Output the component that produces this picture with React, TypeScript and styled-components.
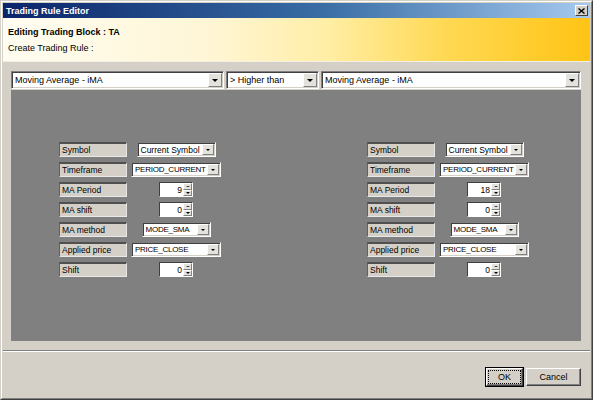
import styled, { createGlobalStyle } from 'styled-components';

// Trading Rule Editor dialog (Windows classic look)

const GlobalStyle = createGlobalStyle`
  html, body {
    margin: 0;
    padding: 0;
    background: #d4d0c8;
  }
  * {
    box-sizing: border-box;
  }
`;

const Window = styled.div`
  width: 593px;
  height: 400px;
  display: flex;
  flex-direction: column;
  background: #d4d0c8;
  border-top: 1px solid #d4d0c8;
  border-left: 1px solid #d4d0c8;
  border-right: 1px solid #404040;
  border-bottom: 1px solid #404040;
  font-family: 'Liberation Sans', Arial, sans-serif;
  color: #000;
`;

const Frame = styled.div`
  flex: 1;
  display: flex;
  flex-direction: column;
  padding: 1px;
  border-top: 1px solid #ffffff;
  border-left: 1px solid #ffffff;
  border-right: 1px solid #808080;
  border-bottom: 1px solid #808080;
`;

const TitleBar = styled.div`
  height: 15px;
  display: flex;
  align-items: center;
  justify-content: space-between;
  padding: 0 2px 0 3px;
  background: linear-gradient(to right, #0a246a 0%, #3a6ea5 55%, #a6caf0 100%);
  color: #fff;
  font-size: 9px;
  font-weight: bold;
`;

const CloseBtn = styled.div`
  width: 13px;
  height: 11px;
  display: flex;
  align-items: center;
  justify-content: center;
  background: #d4d0c8;
  border-top: 1px solid #fff;
  border-left: 1px solid #fff;
  border-right: 1px solid #404040;
  border-bottom: 1px solid #404040;
`;

const Header = styled.div`
  height: 44px;
  display: flex;
  flex-direction: column;
  justify-content: center;
  gap: 6px;
  padding-left: 5px;
  background: linear-gradient(
    to right,
    #fffdf2 0%,
    #fff6d6 35%,
    #ffeea6 55%,
    #ffd955 75%,
    #ffc414 100%
  );
  border-bottom: 1px solid #f4f0e4;
`;

const HeaderTitle = styled.div`
  font-size: 9px;
  font-weight: bold;
`;

const HeaderSub = styled.div`
  font-size: 9px;
`;

const Body = styled.div`
  display: flex;
  flex-direction: column;
  padding: 9px 9px 0 8px;
`;

const ComboRow = styled.div`
  display: flex;
  gap: 2px;
  height: 18px;
  margin-bottom: 1px;
`;

const ComboBox = styled.div<{ $w?: number; $h: number; $grow?: boolean }>`
  display: flex;
  width: ${(p) => (p.$w ? `${p.$w}px` : 'auto')};
  flex: ${(p) => (p.$grow ? 1 : 'none')};
  height: ${(p) => p.$h}px;
  background: #fff;
  border-top: 1px solid #808080;
  border-left: 1px solid #808080;
  border-right: 1px solid #fff;
  border-bottom: 1px solid #fff;
  box-shadow: inset 1px 1px 0 #404040, inset -1px -1px 0 #d4d0c8;
  padding: 1px;
`;

const ComboText = styled.div<{ $size: number; $tight?: boolean }>`
  flex: 1;
  min-width: 0;
  display: flex;
  align-items: center;
  padding-left: 2px;
  font-size: ${(p) => p.$size}px;
  letter-spacing: ${(p) => (p.$tight ? '-0.25px' : '0')};
  white-space: nowrap;
`;

const DropBtn = styled.div<{ $w: number }>`
  width: ${(p) => p.$w}px;
  flex: none;
  display: flex;
  align-items: center;
  justify-content: center;
  background: #e4e2dc;
  border-top: 1px solid #fff;
  border-left: 1px solid #fff;
  border-right: 1px solid #808080;
  border-bottom: 1px solid #808080;
`;

const Arrow = styled.div<{ $up?: boolean; $s?: number }>`
  width: 0;
  height: 0;
  border-left: ${(p) => p.$s ?? 3}px solid transparent;
  border-right: ${(p) => p.$s ?? 3}px solid transparent;
  ${(p) =>
    p.$up
      ? `border-bottom: ${(p.$s ?? 3) - 1}px solid #000;`
      : `border-top: ${p.$s ?? 3}px solid #000;`}
`;

const Panel = styled.div`
  height: 251px;
  background: #808080;
  padding: 52px 0 0 48px;
`;

const Columns = styled.div`
  display: grid;
  grid-template-columns: 166px 166px;
  column-gap: 142px;
`;

const Column = styled.div`
  display: flex;
  flex-direction: column;
  gap: 5px;
`;

const FieldRow = styled.div`
  display: flex;
  height: 15px;
`;

const Label = styled.div`
  width: 68px;
  height: 15px;
  display: flex;
  align-items: center;
  padding-left: 2px;
  font-size: 8.5px;
  background: #d4d0c8;
  border-top: 2px solid #505050;
  border-left: 1px solid #606060;
  border-right: 1px solid #e8e8e8;
  border-bottom: 1px solid #e8e8e8;
`;

const Cell = styled.div`
  flex: 1;
  display: flex;
  justify-content: center;
`;

const SpinBox = styled.div`
  width: 34px;
  height: 15px;
  display: flex;
  background: #fff;
  border-top: 1px solid #404040;
  border-left: 1px solid #404040;
  border-right: 1px solid #fff;
  border-bottom: 1px solid #fff;
`;

const SpinText = styled.div`
  flex: 1;
  display: flex;
  align-items: center;
  justify-content: flex-end;
  padding-right: 1px;
  font-size: 8.5px;
`;

const SpinBtns = styled.div`
  width: 9px;
  display: flex;
  flex-direction: column;
`;

const SpinHalf = styled.div`
  flex: 1;
  display: flex;
  align-items: center;
  justify-content: center;
  background: #e4e2dc;
  border-top: 1px solid #fff;
  border-left: 1px solid #fff;
  border-right: 1px solid #808080;
  border-bottom: 1px solid #808080;
`;

const Separator = styled.div`
  margin-top: 9px;
  height: 2px;
  border-top: 1px solid #808080;
  border-bottom: 1px solid #fff;
`;

const Footer = styled.div`
  flex: 1;
  display: flex;
  justify-content: flex-end;
  align-items: flex-start;
  gap: 3px;
  padding: 16px 9px 0 0;
`;

const Button = styled.div<{ $default?: boolean; $w: number }>`
  width: ${(p) => p.$w}px;
  height: 18px;
  display: flex;
  align-items: center;
  justify-content: center;
  font-size: 9px;
  background: #d4d0c8;
  border-top: 1px solid #fff;
  border-left: 1px solid #fff;
  border-right: 1px solid #404040;
  border-bottom: 1px solid #404040;
  box-shadow: inset -1px -1px 0 #808080;
  ${(p) => (p.$default ? 'outline: 1px solid #000;' : '')}
`;

const FocusRect = styled.div`
  padding: 1px 9px;
  border: 1px dotted #000;
`;

type Field =
  | { label: string; kind: 'combo'; value: string; width: number }
  | { label: string; kind: 'spin'; value: string };

const makeFields = (period: string): Field[] => [
  { label: 'Symbol', kind: 'combo', value: 'Current Symbol', width: 79 },
  { label: 'Timeframe', kind: 'combo', value: 'PERIOD_CURRENT', width: 90 },
  { label: 'MA Period', kind: 'spin', value: period },
  { label: 'MA shift', kind: 'spin', value: '0' },
  { label: 'MA method', kind: 'combo', value: 'MODE_SMA', width: 69 },
  { label: 'Applied price', kind: 'combo', value: 'PRICE_CLOSE', width: 90 },
  { label: 'Shift', kind: 'spin', value: '0' }
];

const Combo = ({ value, width, h, size, grow }: { value: string; width?: number; h: number; size: number; grow?: boolean }) => {
  const upper = value === value.toUpperCase();
  return (
    <ComboBox $w={width} $h={h} $grow={grow}>
      <ComboText $size={upper && h < 16 ? 8 : size} $tight={upper && h < 16}>
        {value}
      </ComboText>
      <DropBtn $w={h > 16 ? 14 : 12}>
        <Arrow $s={h > 16 ? 3 : 2.5} />
      </DropBtn>
    </ComboBox>
  );
};

const Spin = ({ value }: { value: string }) => (
  <SpinBox>
    <SpinText>{value}</SpinText>
    <SpinBtns>
      <SpinHalf>
        <Arrow $up $s={2} />
      </SpinHalf>
      <SpinHalf>
        <Arrow $s={2} />
      </SpinHalf>
    </SpinBtns>
  </SpinBox>
);

const FieldColumn = ({ fields }: { fields: Field[] }) => (
  <Column>
    {fields.map((f) => (
      <FieldRow key={f.label}>
        <Label>{f.label}</Label>
        <Cell>
          {f.kind === 'combo' ? (
            <Combo value={f.value} width={f.width} h={15} size={8.5} />
          ) : (
            <Spin value={f.value} />
          )}
        </Cell>
      </FieldRow>
    ))}
  </Column>
);

const App = () => {
  return (
    <>
      <GlobalStyle />
      <Window>
        <Frame>
          <TitleBar>
            <span>Trading Rule Editor</span>
            <CloseBtn>
              <svg width="7" height="6" viewBox="0 0 7 6">
                <path d="M0.5 0.5 L6.5 5.5 M6.5 0.5 L0.5 5.5" stroke="#000" strokeWidth="1.4" />
              </svg>
            </CloseBtn>
          </TitleBar>
          <Header>
            <HeaderTitle>Editing Trading Block : TA</HeaderTitle>
            <HeaderSub>Create Trading Rule :</HeaderSub>
          </Header>
          <Body>
            <ComboRow>
              <Combo value="Moving Average - iMA" width={213} h={18} size={9} />
              <Combo value="> Higher than" width={93} h={18} size={9} />
              <Combo value="Moving Average - iMA" h={18} size={9} grow />
            </ComboRow>
            <Panel>
              <Columns>
                <FieldColumn fields={makeFields('9')} />
                <FieldColumn fields={makeFields('18')} />
              </Columns>
            </Panel>
          </Body>
          <Separator />
          <Footer>
            <Button $default $w={37}>
              <FocusRect>OK</FocusRect>
            </Button>
            <Button $w={55}>Cancel</Button>
          </Footer>
        </Frame>
      </Window>
    </>
  );
};

export default App;
